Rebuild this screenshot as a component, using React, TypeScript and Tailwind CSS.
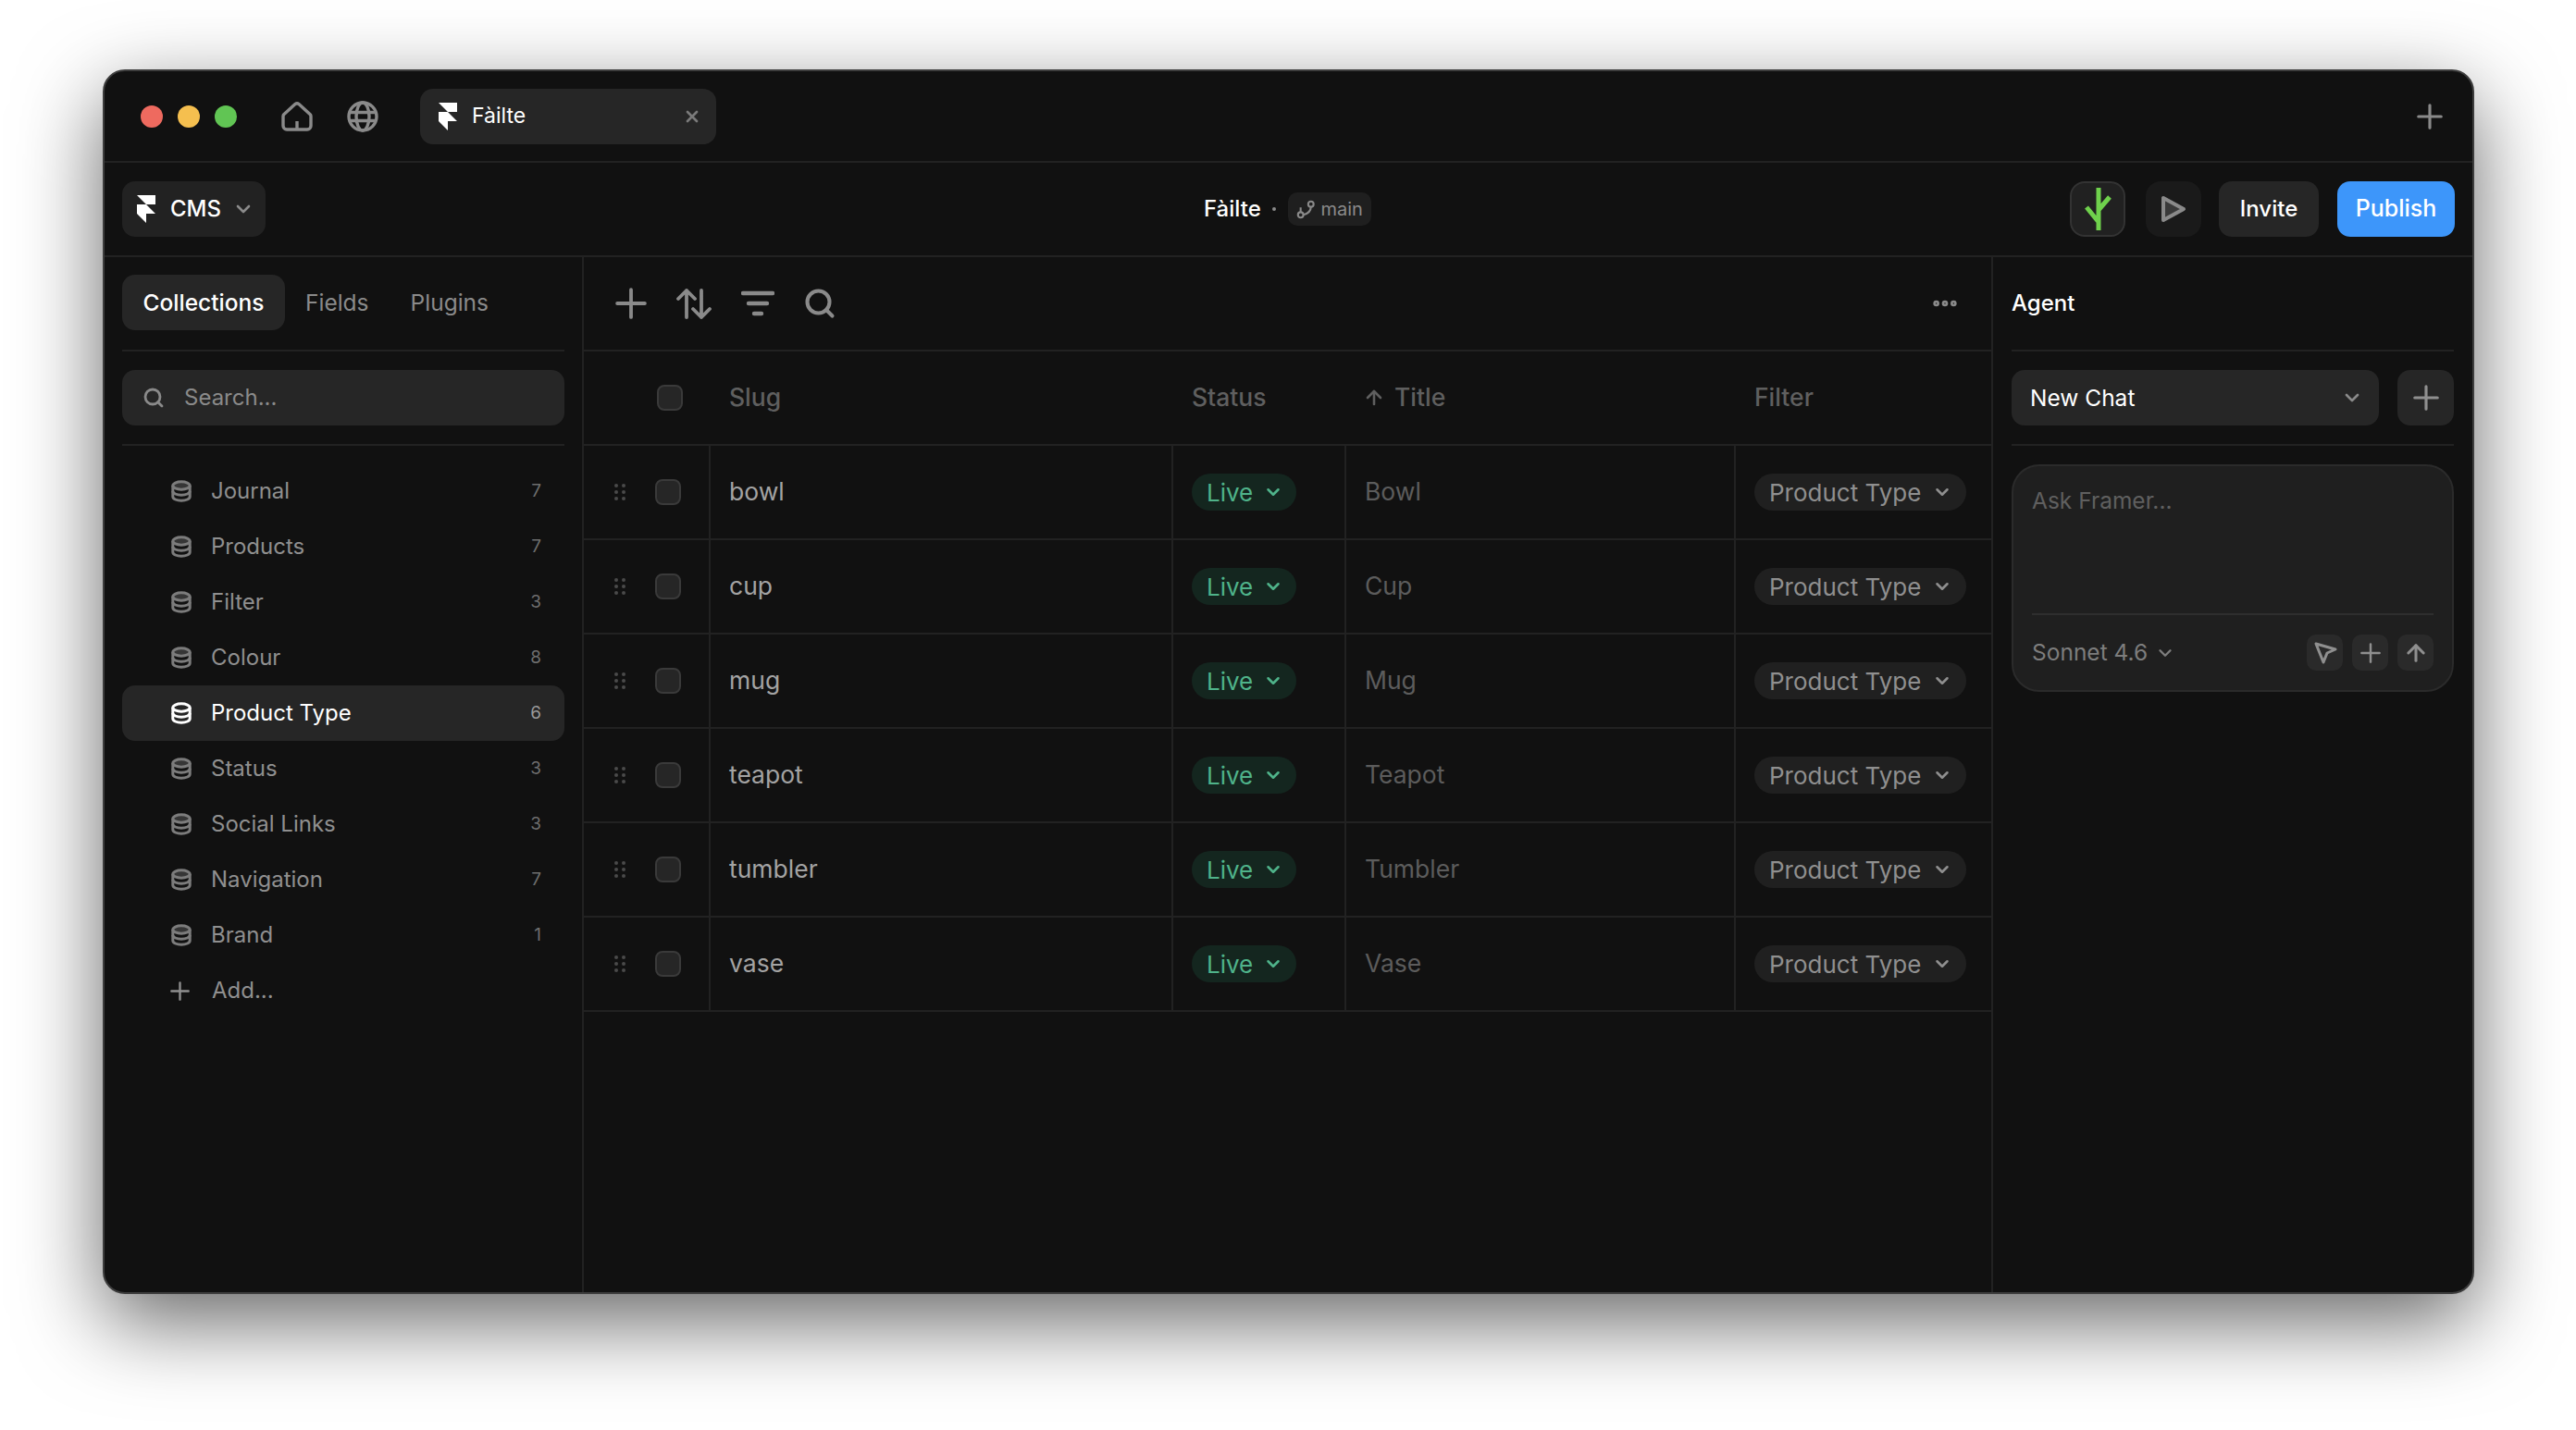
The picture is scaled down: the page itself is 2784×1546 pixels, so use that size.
import { ArrowUp, ChevronDown, Ellipsis, Search, X } from "lucide-react";

const collections = [
  { name: "Journal", count: 7 },
  { name: "Products", count: 7 },
  { name: "Filter", count: 3 },
  { name: "Colour", count: 8 },
  { name: "Product Type", count: 6, active: true },
  { name: "Status", count: 3 },
  { name: "Social Links", count: 3 },
  { name: "Navigation", count: 7 },
  { name: "Brand", count: 1 },
];

const rows = [
  { slug: "bowl", title: "Bowl" },
  { slug: "cup", title: "Cup" },
  { slug: "mug", title: "Mug" },
  { slug: "teapot", title: "Teapot" },
  { slug: "tumbler", title: "Tumbler" },
  { slug: "vase", title: "Vase" },
];

function FramerLogo({ className }: { className?: string }) {
  return (
    <svg viewBox="0 0 16 24" className={className} fill="currentColor">
      <path d="M0 0h16v8H8L0 0zM0 8h8l8 8H8v8l-8-8V8z" />
    </svg>
  );
}

function PlusIcon({ className }: { className?: string }) {
  return (
    <svg viewBox="0 0 32 32" className={className} fill="none" stroke="currentColor" strokeWidth="3.6" strokeLinecap="round">
      <path d="M16 2v28M2 16h28" />
    </svg>
  );
}

function DbIcon({ active }: { active?: boolean }) {
  return (
    <svg viewBox="0 0 22 24" className={`h-6 w-[22px] shrink-0 ${active ? "text-white" : "text-[#7c7c7c]"}`} fill="none" stroke="currentColor" strokeWidth="3">
      <ellipse cx="11" cy="6" rx="9.2" ry="4.2" fill="currentColor" fillOpacity={active ? 0 : 0.35} />
      <path d="M1.800 6v12c0 2.400 4.100 4.200 9.200 4.200s9.200-1.800 9.200-4.200V6" />
      <path d="M1.800 12c0 2.400 4.100 4.200 9.200 4.200s9.200-1.800 9.200-4.200" />
    </svg>
  );
}

function Checkbox() {
  return <div className="h-7 w-7 rounded-[8px] border-2 border-[#3a3a3a] bg-[#262626]" />;
}

function DragHandle() {
  return (
    <svg viewBox="0 0 14 20" className="h-5 w-3.5 text-[#4a4a4a]" fill="currentColor">
      <circle cx="3" cy="3" r="2" />
      <circle cx="11" cy="3" r="2" />
      <circle cx="3" cy="10" r="2" />
      <circle cx="11" cy="10" r="2" />
      <circle cx="3" cy="17" r="2" />
      <circle cx="11" cy="17" r="2" />
    </svg>
  );
}

function TableRow({ slug, title }: { slug: string; title: string }) {
  return (
    <div className="grid h-[102px] grid-cols-[135px_500px_187px_421px_1fr] border-b-2 border-[#222]">
      <div className="flex items-center gap-[31px] pl-[32px]">
        <DragHandle />
        <Checkbox />
      </div>
      <div className="flex items-center border-l-2 border-[#222] pl-[20px] text-[26.5px] text-[#a3a3a3]">{slug}</div>
      <div className="flex items-center border-l-2 border-[#222] pl-[20px] text-[26px]">
        <div className="flex h-10 w-[113px] items-center gap-[11px] rounded-full bg-[#14261f] pl-4 text-[#4fb38a]">
          Live
          <ChevronDown className="h-[22px] w-[22px]" strokeWidth={2.8} />
        </div>
      </div>
      <div className="flex items-center border-l-2 border-[#222] pl-[20px] text-[26.5px] text-[#5c5c5c]">{title}</div>
      <div className="flex items-center border-l-2 border-[#222] pl-[20px] text-[26px]">
        <div className="flex h-10 w-[229px] items-center gap-[12px] rounded-full bg-[#202020] pl-4 text-[#8f8f8f]">
          Product Type
          <ChevronDown className="h-[22px] w-[22px]" strokeWidth={2.8} />
        </div>
      </div>
    </div>
  );
}

export default function App() {
  return (
    <div className="min-h-screen bg-white pl-[111px] pt-[75px] font-['Inter',sans-serif]">
      <div className="flex h-[1324px] w-[2563px] flex-col overflow-hidden rounded-[24px] border-2 border-[#3d3d3d] bg-[#111111] shadow-[0_30px_90px_rgba(0,0,0,0.6)]">
        {/* title bar */}
        <div className="flex h-[99px] shrink-0 items-center border-b-2 border-[#222] pl-[39px] pr-[32px]">
          <div className="flex items-center gap-4">
            <span className="h-6 w-6 rounded-full bg-[#ee6a5f]" />
            <span className="h-6 w-6 rounded-full bg-[#f5bf4f]" />
            <span className="h-6 w-6 rounded-full bg-[#61c554]" />
          </div>
          <svg viewBox="0 0 34 34" className="ml-[48px] h-[34px] w-[34px] text-[#8a8a8a]" fill="none" stroke="currentColor" strokeWidth="3.4">
            <path d="M3 14.500 15 3.600c1.200-1 2.800-1 4 0L31 14.500c.6.6 1 1.400 1 2.200V27c0 2.200-1.800 4-4 4H6c-2.200 0-4-1.800-4-4V16.700c0-.8.4-1.600 1-2.200z" />
            <path d="M17 31v-9" />
          </svg>
          <svg viewBox="0 0 34 34" className="ml-[37px] h-[34px] w-[34px] text-[#8a8a8a]" fill="none" stroke="currentColor" strokeWidth="3.4">
            <circle cx="17" cy="17" r="15" />
            <ellipse cx="17" cy="17" rx="7" ry="15" />
            <path d="M2 12.500h30M2 21.500h30" />
          </svg>
          <div className="ml-[45px] flex h-[60px] w-[320px] items-center rounded-[14px] bg-[#262626] pl-5 pr-4">
            <FramerLogo className="h-[30px] w-5 text-white" />
            <span className="ml-4 text-[23px] text-white">Fàilte</span>
            <X className="ml-auto h-[20px] w-[20px] text-[#7a7a7a]" strokeWidth={3.2} />
          </div>
          <PlusIcon className="ml-auto h-7 w-7 text-[#8a8a8a]" />
        </div>

        {/* toolbar */}
        <div className="relative flex h-[102px] shrink-0 items-center border-b-2 border-[#222] px-[19px]">
          <div className="flex h-[60px] w-[155px] items-center rounded-[14px] bg-[#222222] pl-4">
            <FramerLogo className="h-[30px] w-5 text-white" />
            <span className="ml-4 text-[24px] font-medium text-white">CMS</span>
            <ChevronDown className="ml-[12px] h-6 w-6 text-[#8a8a8a]" strokeWidth={2.6} />
          </div>
          <div className="absolute left-[1188px] flex items-center">
            <span className="text-[24px] font-medium text-white">Fàilte</span>
            <span className="ml-3 h-1 w-1 rounded-full bg-[#8a8a8a]" />
            <div className="ml-[13px] flex h-9 w-[90px] items-center justify-center gap-[6px] rounded-[10px] bg-[#1f1f1f] text-[20px] text-[#8a8a8a]">
              <svg viewBox="0 0 18 18" className="h-[21px] w-[21px]" fill="none" stroke="currentColor" strokeWidth="1.8">
                <circle cx="4" cy="14" r="2.500" />
                <circle cx="13.500" cy="4" r="2.500" />
                <path d="M4 11.500V7M13.500 6.500c0 4-3 6.500-7 7.500" />
              </svg>
              main
            </div>
          </div>
          <div className="ml-auto flex items-center">
            <div className="flex h-[60px] w-[60px] items-center justify-center rounded-[16px] border-2 border-[#333] bg-[#212121]">
              <svg viewBox="0 0 30 46" className="h-[46px] w-[30px]" fill="none" stroke="#6fd14c" strokeWidth="5">
                <path d="M16 0v46M16 24 28 10M16 37 3 21" />
              </svg>
            </div>
            <div className="ml-[22px] flex h-[60px] w-[60px] items-center justify-center rounded-[16px] bg-[#1a1a1a]">
              <svg viewBox="0 0 28 30" className="h-[30px] w-7 text-[#8a8a8a]" stroke="currentColor" strokeWidth="4" strokeLinejoin="round" fill="#3a3a3a">
                <path d="M3 3v24l22-12z" />
              </svg>
            </div>
            <div className="ml-[19px] flex h-[60px] w-[108px] items-center justify-center rounded-[14px] bg-[#262626] text-[24px] font-medium text-white">Invite</div>
            <div className="ml-[20px] flex h-[60px] w-[127px] items-center justify-center rounded-[14px] bg-[#3d96fa] text-[25px] font-medium text-white">Publish</div>
          </div>
        </div>

        <div className="flex min-h-0 flex-1">
          {/* sidebar */}
          <div className="w-[518px] shrink-0 border-r-2 border-[#222] px-[19px]">
            <div className="flex h-[102px] items-center border-b-2 border-[#222] pb-[2px] text-[24.5px]">
              <div className="flex h-[60px] w-[176px] items-center justify-center rounded-[14px] bg-[#262626] font-medium text-white">Collections</div>
              <span className="ml-[22px] text-[#8a8a8a]">Fields</span>
              <span className="ml-[45px] text-[#8a8a8a]">Plugins</span>
            </div>
            <div className="border-b-2 border-[#222] py-[20px]">
              <div className="flex h-[60px] items-center gap-[21px] rounded-[14px] bg-[#262626] pl-[22px] text-[24px] text-[#8a8a8a]">
                <Search className="h-6 w-6" strokeWidth={2.8} />
                Search...
              </div>
            </div>
            <div className="pt-[19px]">
              {collections.map((c) => (
                <div
                  key={c.name}
                  className={`flex h-[60px] items-center rounded-[14px] pl-[53px] pr-[25px] text-[24px] ${c.active ? "bg-[#262626] text-white" : "text-[#8f8f8f]"}`}
                >
                  <DbIcon active={c.active} />
                  <span className="ml-[21px]">{c.name}</span>
                  <span className={`ml-auto text-[19px] ${c.active ? "text-[#9a9a9a]" : "text-[#6e6e6e]"}`}>{c.count}</span>
                </div>
              ))}
              <div className="flex h-[60px] items-center pl-[52px] text-[24px] text-[#8f8f8f]">
                <PlusIcon className="h-[21px] w-[21px]" />
                <span className="ml-[24px]">Add...</span>
              </div>
            </div>
          </div>

          {/* table */}
          <div className="min-w-0 flex-1">
            <div className="flex h-[102px] items-center border-b-2 border-[#222] pl-[34px] pr-[34px] text-[#8a8a8a]">
              <PlusIcon className="h-[34px] w-[34px]" />
              <svg viewBox="0 0 40 34" className="ml-[31px] h-[34px] w-10" fill="none" stroke="currentColor" strokeWidth="3.8" strokeLinecap="round" strokeLinejoin="round">
                <path d="M12 32V3M3 12l9-9 9 9M28 3v29M19 23l9 9 9-9" />
              </svg>
              <svg viewBox="0 0 36 28" className="ml-[31px] h-7 w-9" fill="none" stroke="currentColor" strokeWidth="4.4" strokeLinecap="round">
                <path d="M2 3h32M8 14h20M14 25h8" />
              </svg>
              <Search className="ml-[31px] h-9 w-9" strokeWidth={2.7} />
              <Ellipsis className="ml-auto h-8 w-8" strokeWidth={3} />
            </div>
            <div className="grid h-[102px] grid-cols-[135px_500px_187px_421px_1fr] border-b-2 border-[#222] text-[26.5px] font-medium text-[#5f5f5f]">
              <div className="flex items-center pl-[79px]">
                <Checkbox />
              </div>
              <div className="flex items-center pl-[22px]">Slug</div>
              <div className="flex items-center pl-[22px]">Status</div>
              <div className="flex items-center gap-[10px] pl-[20px]">
                <ArrowUp className="h-6 w-6" strokeWidth={2.6} />
                Title
              </div>
              <div className="flex items-center pl-[22px]">Filter</div>
            </div>
            {rows.map((r) => (
              <TableRow key={r.slug} slug={r.slug} title={r.title} />
            ))}
          </div>

          {/* agent panel */}
          <div className="w-[520px] shrink-0 border-l-2 border-[#222] px-[20px]">
            <div className="flex h-[102px] items-center border-b-2 border-[#222] text-[24px] font-medium text-white">Agent</div>
            <div className="flex gap-5 border-b-2 border-[#222] py-[20px]">
              <div className="flex h-[60px] flex-1 items-center justify-between rounded-[14px] bg-[#262626] pl-5 pr-[17px] text-[24.5px] text-white">
                New Chat
                <ChevronDown className="h-6 w-6 text-[#8a8a8a]" strokeWidth={2.6} />
              </div>
              <div className="flex h-[60px] w-[61px] items-center justify-center rounded-[14px] bg-[#262626]">
                <PlusIcon className="h-7 w-7 text-[#8f8f8f]" />
              </div>
            </div>
            <div className="mt-[20px] h-[246px] rounded-[30px] border-2 border-[#2b2b2b] bg-[#1f1f1f] px-[20px]">
              <div className="h-[161px] border-b-2 border-[#2e2e2e] pt-[20px] text-[24.5px] leading-[34px] text-[#5f5f5f]">Ask Framer...</div>
              <div className="flex h-[81px] items-center text-[24.5px] text-[#7d7d7d]">
                Sonnet 4.6
                <ChevronDown className="ml-[8px] h-[22px] w-[22px]" strokeWidth={2.6} />
                <div className="ml-auto flex gap-[10px]">
                  <div className="flex h-[39px] w-[39px] items-center justify-center rounded-[10px] bg-[#2a2a2a]">
                    <svg viewBox="0 0 26 26" className="h-[26px] w-[26px] text-[#8f8f8f]" fill="none" stroke="currentColor" strokeWidth="3" strokeLinejoin="round">
                      <path d="M3 3l21 6-9 4-4 10z" />
                    </svg>
                  </div>
                  <div className="flex h-[39px] w-[39px] items-center justify-center rounded-[10px] bg-[#2a2a2a]">
                    <PlusIcon className="h-[22px] w-[22px] text-[#8f8f8f]" />
                  </div>
                  <div className="flex h-[39px] w-[39px] items-center justify-center rounded-[10px] bg-[#2a2a2a]">
                    <ArrowUp className="h-7 w-7 text-[#8f8f8f]" strokeWidth={2.6} />
                  </div>
                </div>
              </div>
            </div>
          </div>
        </div>
      </div>
    </div>
  );
}
